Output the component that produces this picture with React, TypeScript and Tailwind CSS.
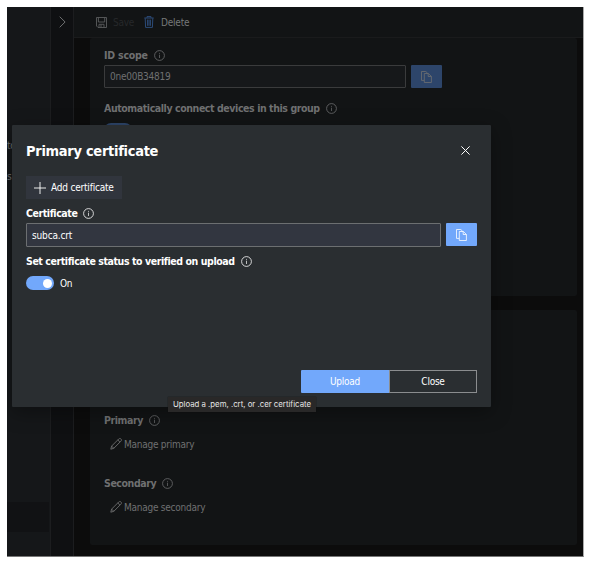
import React from "react";

const sans = "font-['DejaVu_Sans_Condensed','DejaVu_Sans',sans-serif] [font-stretch:condensed] tracking-[-0.25px]";

function Info() {
  return (
    <svg className="mb-px h-[11px] w-[11px] shrink-0" viewBox="0 0 11 11" fill="none" stroke="currentColor">
      <circle cx="5.5" cy="5.5" r="4.9" strokeWidth="0.8" />
      <path d="M5.5 4.7V8M5.5 2.9V3.8" strokeWidth="0.7" />
    </svg>
  );
}

function Copy() {
  return (
    <svg className="h-3 w-[11px]" viewBox="0 0 11 12" fill="none" stroke="currentColor" strokeWidth="0.8">
      <path d="M3.2 9.4H.5V.5H4.8L6.6 2.2" />
      <path d="M3.3 2.5H7.4L10.4 5.4V11.5H3.3ZM7.2 2.6V5.5H10.3" />
    </svg>
  );
}

function Pencil() {
  return (
    <svg className="h-3 w-3 shrink-0" viewBox="0 0 12 12" fill="none" stroke="currentColor" strokeWidth="0.9" strokeLinejoin="round">
      <path d="M.8 11.2L1.6 8.1L8.7 1C9.4.3 10.3.3 10.9.9C11.6 1.6 11.6 2.5 10.9 3.2L3.8 10.3ZM7.8 2L10 4.2M1.6 8.1L3.8 10.3" />
    </svg>
  );
}

function Label({ text, top = "", tracking = "tracking-[-0.42px]" }: { text: string; top?: string; tracking?: string }) {
  return (
    <div className={`flex h-4 items-center gap-1.5 whitespace-nowrap text-[10.5px] font-bold ${top}`}>
      <span className={tracking}>{text}</span>
      <Info />
    </div>
  );
}

function Manage({ text }: { text: string }) {
  return (
    <div className="ml-1.5 mt-[7px] flex h-4 items-center gap-[2px] text-[10px]">
      <Pencil />
      <span>{text}</span>
    </div>
  );
}

export default function App() {
  return (
    <div className={`h-[564px] w-[590px] overflow-hidden bg-white pl-[7px] pt-[7px] ${sans}`}>
      <div className="relative flex h-[550px] w-[577px] overflow-hidden border-b border-r border-b-[#777] border-r-[#aaa] bg-[#0c0c0c] text-[#6f7071]">
        <aside className="flex w-[44px] shrink-0 flex-col overflow-hidden border-r border-[#1c1d1f] bg-[#151719] text-[10px]">
          <span className="mt-[131px] h-4 leading-4">to</span>
          <span className="mt-[15px] h-4 leading-4">s</span>
          <div className="mt-[317px] h-[30px] w-[42px] bg-[#111214]" />
        </aside>
        <div className="flex w-[23px] shrink-0 justify-center border-r border-[#1c1d1f] bg-[#0f1012] pt-[9px]">
          <svg className="h-3 w-[7px]" viewBox="0 0 7 12" fill="none" stroke="currentColor">
            <path d="M.7 .7L6.1 6L.7 11.3" />
          </svg>
        </div>
        <main className="min-w-0 flex-1 bg-[#0c0c0c]">
          <div className="flex h-[31px] items-center border-b border-[#1a1b1c] bg-[#121415] pl-[22px] text-[10px]">
            <svg className="h-[11px] w-[11px]" viewBox="0 0 11 11" fill="none" stroke="#5b5c5d" strokeWidth="0.9">
              <path d="M.5.5H10.5V10.5H2L.5 9ZM2.4.7V5H8.7V.7M3 10.3V7.3H8V10.3M5 7.5V10" />
            </svg>
            <span className="ml-[6px] w-[31px] text-[#26282a]">Save</span>
            <svg className="h-3 w-[10px]" viewBox="0 0 10 12" fill="none" stroke="#2c4b78" strokeWidth="1">
              <path d="M.3 2H9.7M3 1.8V.6H7V1.8M1.2 2.2L1.6 11.4H8.4L8.8 2.2M3.6 3.6V9.8M5 3.6V9.8M6.4 3.6V9.8" />
            </svg>
            <span className="ml-[7px] tracking-[-0.2px] text-[#77797a]">Delete</span>
          </div>
          <section className="ml-4 h-[258px] w-[487px] rounded-[2px] bg-[#121415] pl-[14px] pt-[10px]">
            <Label text="ID scope" tracking="tracking-[-0.22px]" />
            <div className="mt-[1px] flex gap-[5px]">
              <div className="flex h-[23px] w-[302px] items-center rounded-[1px] border border-[#3a3b3c] bg-[#16181a] pl-[5px] text-[10px]">0ne00B34819</div>
              <div className="flex h-[23px] w-[31px] items-center justify-center rounded-[1px] bg-[#2d456a]"><Copy /></div>
            </div>
            <Label text="Automatically connect devices in this group" top="mt-[13px]" />
            <div className="mt-[6px] h-[14px] w-7 rounded-full bg-[#2d456a]" />
          </section>
          <section className="ml-4 mt-[14px] h-[235px] w-[487px] rounded-[2px] bg-[#121415] pl-[14px] pt-[103px]">
            <Label text="Primary" />
            <Manage text="Manage primary" />
            <Label text="Secondary" top="mt-6" />
            <Manage text="Manage secondary" />
          </section>
        </main>

        <div className="absolute left-[5px] top-[118px] h-[282px] w-[479px] rounded-[1px] bg-[#2a2e31] px-[14px] pt-4 text-white shadow-[0_5px_20px_rgba(0,0,0,0.35)]">
          <div className="flex h-5 items-center justify-between">
            <h1 className="mt-px whitespace-nowrap text-[14.5px] font-bold tracking-[-0.3px]">Primary certificate</h1>
            <svg className="mb-0.5 mr-[7px] h-[9px] w-[9px]" viewBox="0 0 9 9" stroke="currentColor" strokeWidth="1">
              <path d="M.4.4L8.6 8.6M8.6.4L.4 8.6" />
            </svg>
          </div>
          <div className="mt-[15px] flex h-[23px] w-24 items-center gap-[5px] bg-[#31353d] pl-2 text-[10px]">
            <svg className="h-3 w-3 shrink-0" viewBox="0 0 12 12" stroke="currentColor" strokeWidth="0.9"><path d="M6 0V12M0 6H12" /></svg>
            <span className="whitespace-nowrap tracking-[-0.2px]">Add certificate</span>
          </div>
          <Label text="Certificate" top="mt-[7px]" />
          <div className="mt-[1px] flex gap-[5px]">
            <div className="flex h-6 w-[415px] items-center rounded-[1px] border border-[#6c6f71] bg-[#323640] pl-[5px] text-[10px] tracking-[-0.15px]">subca.crt</div>
            <div className="flex h-[23px] w-[31px] items-center justify-center rounded-[1px] bg-[#72a8fb]"><Copy /></div>
          </div>
          <Label text="Set certificate status to verified on upload" top="mt-[7px]" />
          <div className="mt-[6px] flex h-[14px] items-center gap-1.5 text-[10px]">
            <div className="flex h-[14px] w-7 items-center justify-end rounded-full bg-[#72a8fb] pr-0.5">
              <div className="h-[9px] w-[9px] rounded-full bg-white" />
            </div>
            <span>On</span>
          </div>
          <div className="ml-[275px] mt-20 flex h-[23px] text-[10px]">
            <div className="flex w-[88px] items-center justify-center rounded-l-[1px] bg-[#72a8fb]">Upload</div>
            <div className="flex w-[88px] items-center justify-center border border-[#8b8d8f]">Close</div>
          </div>
        </div>
        <div className="absolute left-[161px] top-[390px] flex h-[15px] w-[148px] items-center justify-center whitespace-nowrap bg-[#292828] font-['Inter',sans-serif] text-[7.8px] tracking-normal text-[#e6e6e6] shadow-[0_0_1px_#111]">
          Upload a .pem, .crt, or .cer certificate
        </div>
      </div>
    </div>
  );
}
